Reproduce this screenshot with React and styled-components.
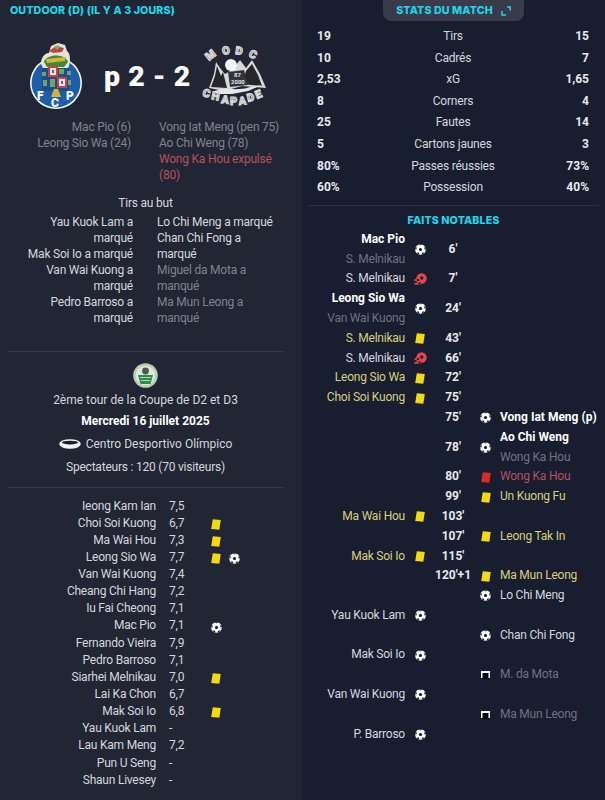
import React from 'react';
import styled, { createGlobalStyle } from 'styled-components';

const GlobalStyle = createGlobalStyle`
  html, body { margin: 0; padding: 0; background: #191d30; }
  body { font-family: Roboto, "Liberation Sans", sans-serif; font-size: 12px; letter-spacing: -0.22px; color: #d5d7de; }
`;

const CYAN = '#1fd6ea';
const YELLOW = '#d8d07e';
const GREY = '#6f7280';
const RED = '#b5525f';

const Page = styled.div`
  display: grid;
  grid-template-columns: 302px 303px;
  width: 605px;
  height: 800px;
  overflow: hidden;
`;

const LeftPanel = styled.section`
  background: #222534;
  padding: 5px 19px 0 8px;
  box-sizing: border-box;
`;

const RightPanel = styled.section`
  background: #191d30;
  display: flex;
  flex-direction: column;
  align-items: stretch;
`;

const Heading = styled.h3`
  margin: 0;
  font-family: Inter, sans-serif;
  font-size: 10.7px;
  font-weight: 800;
  line-height: 12px;
  letter-spacing: 0.1px;
  text-transform: uppercase;
  color: ${CYAN};
  padding-left: ${(p) => p.$indent || 0}px;
  text-align: ${(p) => (p.$center ? 'center' : 'left')};
`;

const MatchRow = styled.div`
  display: grid;
  grid-template-columns: 96px 84px 1fr;
  align-items: center;
  height: 70px;
  margin-top: 24px;
`;

const Crest = styled.div`
  display: flex;
  justify-content: center;
`;

const Score = styled.div`
  font-size: 28.5px;
  font-weight: 900;
  color: #fff;
  text-align: center;
  white-space: nowrap;
  letter-spacing: 0.5px;
`;

const Scorers = styled.div`
  display: grid;
  grid-template-columns: 123px 124px;
  column-gap: 28px;
  margin-top: 8px;
  line-height: 16px;
  color: #80838f;
`;

const Column = styled.div`
  text-align: ${(p) => p.$align || 'left'};
`;

const Line = styled.div`
  color: ${(p) => p.$color || 'inherit'};
`;

const SubTitle = styled.div`
  margin-top: 12px;
  line-height: 16px;
  text-align: center;
  color: #d5d7de;
`;

const Shots = styled.div`
  display: grid;
  grid-template-columns: 125px 120px;
  column-gap: 24px;
  margin-top: 3px;
  line-height: 16px;
`;

const Divider = styled.hr`
  border: 0;
  height: 1px;
  margin: ${(p) => p.$margin};
  background: ${(p) => p.$color || '#363949'};
`;

const Info = styled.div`
  display: flex;
  flex-direction: column;
  align-items: center;
  line-height: 16px;
  color: #d5d7de;
`;

const CupCrest = styled.div`
  height: 24px;
  margin-bottom: 5px;
`;

const Competition = styled.div`
  letter-spacing: 0;
`;

const DateLine = styled.div`
  margin-top: 5px;
  font-weight: 700;
  letter-spacing: 0;
  color: #fff;
`;

const Stadium = styled.div`
  display: flex;
  align-items: center;
  gap: 5px;
  margin-top: 7px;
  letter-spacing: 0;
`;

const Spectators = styled.div`
  margin-top: 7px;
`;

const Ratings = styled.div`
  margin-top: 9.5px;
`;

const RatingRow = styled.div`
  display: grid;
  grid-template-columns: 148px 51px 18px 18px;
  height: 17.15px;
  line-height: 17.15px;
  align-items: center;
`;

const PlayerName = styled.div`
  text-align: right;
  white-space: nowrap;
`;

const Rating = styled.div`
  padding-left: 13px;
`;

const IconCell = styled.div`
  display: flex;
  justify-content: center;
  align-items: center;
`;

const RatingIcon = styled(IconCell)`
  padding-top: 2px;
`;

const Tab = styled.div`
  align-self: center;
  display: flex;
  align-items: center;
  justify-content: center;
  gap: 8px;
  width: 141px;
  height: 21px;
  background: #393b4b;
  border-radius: 0 0 8px 8px;
`;

const Stats = styled.div`
  margin-top: 5px;
  padding: 0 16px 0 15px;
`;

const StatRow = styled.div`
  display: grid;
  grid-template-columns: 60px 1fr 60px;
  height: 21.6px;
  line-height: 21.6px;
`;

const StatValue = styled.div`
  font-weight: 700;
  letter-spacing: 0;
  color: #e8e9ed;
  text-align: ${(p) => p.$align || 'left'};
`;

const StatLabel = styled.div`
  text-align: center;
`;

const Events = styled.div`
  margin-top: 3px;
`;

const EventRow = styled.div`
  display: grid;
  grid-template-columns: 103px 30px 36px 29px 1fr;
  align-items: center;
  line-height: 19.8px;
  min-height: 19.8px;
`;

const EventName = styled.div`
  text-align: ${(p) => p.$align || 'left'};
  white-space: nowrap;
  font-weight: ${(p) => (p.$bold ? 700 : 400)};
  letter-spacing: ${(p) => (p.$bold ? '0' : 'inherit')};
  color: ${(p) => p.$color || '#d5d7de'};
`;

const EventTime = styled.div`
  text-align: center;
  white-space: nowrap;
  font-weight: 700;
  letter-spacing: 0;
  color: #e8e9ed;
`;

const Svg = styled.svg`
  display: block;
  flex: none;
`;

const Ball = ({ color = '#fff', size = 11 }) => (
  <Svg width={size} height={size} viewBox="0 0 12 12">
    <circle cx="6" cy="6" r="5.8" fill={color} />
    <path d="M6 4.2 7.9 5.5 7.1 7.6H4.9L4.1 5.5Z" fill="#20232f" />
    <path d="M4.4 0.2 7.6 0.2 6.8 1.4H5.2ZM0 5 1.2 3 2 4.4 1.2 6.6ZM12 5 10.8 3 10 4.4 10.8 6.6ZM3 11.4 2 9.2 4 9.4 5 11.4ZM9 11.4 10 9.2 8 9.4 7 11.4Z" fill="#20232f" />
  </Svg>
);

const OwnGoal = () => (
  <Svg width={13} height={12} viewBox="0 0 13 12">
    <circle cx="7.5" cy="5.5" r="5.2" fill="#e8474e" />
    <path d="M6.5 3.5 9 3.5 9.5 5.6 8 7 6 6Z" fill="#191d30" />
    <rect x="0.5" y="6" width="6.5" height="5.8" fill="#d8404a" />
    <path d="M0.5 8H2.6V10H0.5ZM3 6H5V8H3ZM4.6 9.4H6.6V11.4H4.6Z" fill="#191d30" />
  </Svg>
);

const Card = ({ color = '#f5d90f' }) => (
  <Svg width={10} height={11} viewBox="0 0 10 11">
    <path d="M1.8 0.3 9.8 1 8.3 10.7 0.2 10Z" fill={color} />
  </Svg>
);

const MissedGoal = () => (
  <Svg width={9} height={8} viewBox="0 0 9 8">
    <rect x="0" y="0" width="9" height="7" fill="#fff" />
    <rect x="1.5" y="2" width="6" height="6" fill="#05060a" />
  </Svg>
);

const ExpandIcon = () => (
  <Svg width={10} height={10} viewBox="0 0 10 10" fill="none" stroke={CYAN} strokeWidth="1.5">
    <path d="M6 1H9.2V4.4" />
    <path d="M1 5V9H5" />
  </Svg>
);

const PortoCrest = () => (
  <Svg width={54} height={68} viewBox="0 0 54 68">
    <circle cx="27" cy="41" r="26" fill="#f4f6fa" />
    <circle cx="27" cy="41" r="24.4" fill="#1b5fa8" />
    <path d="M12 22C12 15 16 11 20 11L22 4 29 1 36 3 38 9C41 11 42 17 40 24L38 28H15Z" fill="#e8e3da" />
    <path d="M15 20C17 12 36 11 39 20L35 25H18Z" fill="#3c8a3e" />
    <path d="M17 17 37 15 36 19 18 21Z" fill="#d9b62f" />
    <path d="M20 9 27 4 35 6 33 10 24 11Z" fill="#c2423f" />
    <path d="M25 5 29 3 31 5 28 8Z" fill="#7fae6c" />
    <rect x="13" y="26" width="27" height="23" fill="#1a4f8f" />
    <rect x="19" y="24" width="10" height="11" fill="#c9403f" />
    <rect x="21" y="26" width="6" height="7" fill="#e9e6e2" />
    <rect x="23" y="28" width="2" height="3" fill="#3b6ea8" />
    <rect x="28" y="35" width="10" height="11" fill="#c9403f" />
    <rect x="30" y="37" width="6" height="7" fill="#e9e6e2" />
    <rect x="32" y="39" width="2" height="3" fill="#3b6ea8" />
    <path d="M13 30H17V34H13ZM38 29H42V33H38ZM14 38H18V44H14ZM21 37H26V45H21ZM30 27H35V32H30ZM39 38H42V43H39Z" fill="#7da05a" />
    <path d="M25 47 29 47 32 55H22Z" fill="#d6b23b" />
    <text x="8" y="58" fontFamily="Roboto" fontSize="12" fontWeight="900" letterSpacing="0" fill="#fff">F</text>
    <text x="22" y="65" fontFamily="Roboto" fontSize="12" fontWeight="900" letterSpacing="0" fill="#fff">C</text>
    <text x="37" y="58" fontFamily="Roboto" fontSize="12" fontWeight="900" letterSpacing="0" fill="#fff">P</text>
  </Svg>
);

const MountainCrest = () => (
  <Svg width={68} height={64} viewBox="0 0 68 64">
    <path d="M7 44 12 30 14 18 18 24 23 30 30 26 38 16 44 24 50 16 58 30 64 44 40 42 22 47Z" fill="#d8d8d8" />
    <path d="M9 43 13 32 15 22 19 32 21 28 25 44Z" fill="#24262c" />
    <path d="M44 27 50 20 56 31 60 42 40 40Z" fill="#24262c" />
    <path d="M26 28 42 26 46 41 28 43Z" fill="#33353c" />
    <path d="M10 48C24 42 34 48 48 43L60 41 46 47 30 50 16 50Z" fill="#e6e6e6" />
    <circle cx="29" cy="21" r="6" fill="#f4f4f4" />
    <text x="32" y="33" fontFamily="Roboto" fontSize="6" fontWeight="700" letterSpacing="0" fill="#e6e6e6">87</text>
    <text x="29" y="40" fontFamily="Roboto" fontSize="6" fontWeight="700" letterSpacing="0" fill="#e6e6e6">2000</text>
    <g fontFamily="Roboto" fontSize="11" fontWeight="900" letterSpacing="0" fill="#8f8f8f" stroke="#d8d8d8" strokeWidth="1.1">
      <text x="7" y="17" transform="rotate(-38 7 17)">M</text>
      <text x="21" y="11" transform="rotate(-12 21 11)">O</text>
      <text x="33" y="10" transform="rotate(8 33 10)">D</text>
      <text x="46" y="12" transform="rotate(28 46 12)">C</text>
      <text x="0" y="52" transform="rotate(15 0 52)">C</text>
      <text x="9" y="55" transform="rotate(12 9 55)">H</text>
      <text x="19" y="59" transform="rotate(6 19 59)">A</text>
      <text x="28" y="61">P</text>
      <text x="37" y="61" transform="rotate(-6 37 61)">A</text>
      <text x="46" y="58" transform="rotate(-14 46 58)">D</text>
      <text x="55" y="55" transform="rotate(-22 55 55)">E</text>
    </g>
  </Svg>
);

const CupBadge = () => (
  <Svg width={25} height={25} viewBox="0 0 25 25">
    <circle cx="12.5" cy="12.5" r="12.3" fill="#b9cdb4" />
    <circle cx="12.5" cy="12.5" r="9.8" fill="#dfe8da" />
    <circle cx="12.5" cy="8" r="3.4" fill="#4e5a52" />
    <path d="M5 12H20L17.5 21H7.5Z" fill="#2f8b4c" />
    <path d="M7 14.5H18M8 17.5H17" stroke="#b7d8b2" strokeWidth="1" />
  </Svg>
);

const StadiumIcon = () => (
  <Svg width={22} height={10} viewBox="0 0 22 10">
    <ellipse cx="11" cy="5" rx="10.8" ry="4.8" fill="#f1f1f3" />
    <ellipse cx="11" cy="3.6" rx="8" ry="1.8" fill="#191b26" />
  </Svg>
);

const icons = {
  goal: <Ball />,
  own: <OwnGoal />,
  yellow: <Card />,
  red: <Card color="#d92a2a" />,
  miss: <MissedGoal />,
};

const stats = [
  ['19', 'Tirs', '15'],
  ['10', 'Cadrés', '7'],
  ['2,53', 'xG', '1,65'],
  ['8', 'Corners', '4'],
  ['25', 'Fautes', '14'],
  ['5', 'Cartons jaunes', '3'],
  ['80%', 'Passes réussies', '73%'],
  ['60%', 'Possession', '40%'],
];

const players = [
  ['Ieong Kam Ian', '7,5'],
  ['Choi Soi Kuong', '6,7', 'yellow'],
  ['Ma Wai Hou', '7,3', 'yellow'],
  ['Leong Sio Wa', '7,7', 'yellow', 'goal'],
  ['Van Wai Kuong', '7,4'],
  ['Cheang Chi Hang', '7,2'],
  ['Iu Fai Cheong', '7,1'],
  ['Mac Pio', '7,1', 'goal'],
  ['Fernando Vieira', '7,9'],
  ['Pedro Barroso', '7,1'],
  ['Siarhei Melnikau', '7,0', 'yellow'],
  ['Lai Ka Chon', '6,7'],
  ['Mak Soi Io', '6,8', 'yellow'],
  ['Yau Kuok Lam', '-'],
  ['Lau Kam Meng', '7,2'],
  ['Pun U Seng', '-'],
  ['Shaun Livesey', '-'],
];

// side h = home (left of the clock), a = away; names: [text, colour, bold]
const events = [
  { side: 'h', icon: 'goal', time: "6'", names: [['Mac Pio', '#fff', true], ['S. Melnikau', GREY]] },
  { side: 'h', icon: 'own', time: "7'", names: [['S. Melnikau']] },
  { side: 'h', icon: 'goal', time: "24'", names: [['Leong Sio Wa', '#fff', true], ['Van Wai Kuong', GREY]] },
  { side: 'h', icon: 'yellow', time: "43'", names: [['S. Melnikau', YELLOW]] },
  { side: 'h', icon: 'own', time: "66'", names: [['S. Melnikau']] },
  { side: 'h', icon: 'yellow', time: "72'", names: [['Leong Sio Wa', YELLOW]] },
  { side: 'h', icon: 'yellow', time: "75'", names: [['Choi Soi Kuong', YELLOW]] },
  { side: 'a', icon: 'goal', time: "75'", names: [['Vong Iat Meng (p)', '#fff', true]] },
  { side: 'a', icon: 'goal', time: "78'", names: [['Ao Chi Weng', '#fff', true], ['Wong Ka Hou', GREY]] },
  { side: 'a', icon: 'red', time: "80'", names: [['Wong Ka Hou', RED]] },
  { side: 'a', icon: 'yellow', time: "99'", names: [['Un Kuong Fu', YELLOW]] },
  { side: 'h', icon: 'yellow', time: "103'", names: [['Ma Wai Hou', YELLOW]] },
  { side: 'a', icon: 'yellow', time: "107'", names: [['Leong Tak In', YELLOW]] },
  { side: 'h', icon: 'yellow', time: "115'", names: [['Mak Soi Io', YELLOW]] },
  { side: 'a', icon: 'yellow', time: "120'+1", names: [['Ma Mun Leong', YELLOW]] },
  { side: 'a', icon: 'goal', names: [['Lo Chi Meng']] },
  { side: 'h', icon: 'goal', names: [['Yau Kuok Lam']] },
  { side: 'a', icon: 'goal', names: [['Chan Chi Fong']] },
  { side: 'h', icon: 'goal', names: [['Mak Soi Io']] },
  { side: 'a', icon: 'miss', names: [['M. da Mota', GREY]] },
  { side: 'h', icon: 'goal', names: [['Van Wai Kuong']] },
  { side: 'a', icon: 'miss', names: [['Ma Mun Leong', GREY]] },
  { side: 'h', icon: 'goal', names: [['P. Barroso']] },
];

const EventNames = ({ names, align }) => (
  <div>
    {names.map(([text, color, bold], i) => (
      <EventName key={i} $align={align} $color={color} $bold={bold}>
        {text}
      </EventName>
    ))}
  </div>
);

export default function App() {
  return (
    <Page>
      <GlobalStyle />
      <LeftPanel>
        <Heading $indent={2}>Outdoor (D) (il y a 3 jours)</Heading>
        <MatchRow>
          <Crest><PortoCrest /></Crest>
          <Score>p 2 - 2</Score>
          <Crest><MountainCrest /></Crest>
        </MatchRow>
        <Scorers>
          <Column $align="right">
            <Line>Mac Pio (6)</Line>
            <Line>Leong Sio Wa (24)</Line>
          </Column>
          <Column>
            <Line>Vong Iat Meng (pen 75)</Line>
            <Line>Ao Chi Weng (78)</Line>
            <Line $color={RED}>Wong Ka Hou expulsé<br />(80)</Line>
          </Column>
        </Scorers>
        <SubTitle>Tirs au but</SubTitle>
        <Shots>
          <Column $align="right">
            <Line>Yau Kuok Lam a<br />marqué</Line>
            <Line>Mak Soi Io a marqué</Line>
            <Line>Van Wai Kuong a<br />marqué</Line>
            <Line>Pedro Barroso a<br />marqué</Line>
          </Column>
          <Column>
            <Line>Lo Chi Meng a marqué</Line>
            <Line>Chan Chi Fong a<br />marqué</Line>
            <Line $color="#80838f">Miguel da Mota a<br />manqué</Line>
            <Line $color="#80838f">Ma Mun Leong a<br />manqué</Line>
          </Column>
        </Shots>
        <Divider $margin="25px 0 11px" />
        <Info>
          <CupCrest><CupBadge /></CupCrest>
          <Competition>2ème tour de la Coupe de D2 et D3</Competition>
          <DateLine>Mercredi 16 juillet 2025</DateLine>
          <Stadium><StadiumIcon />Centro Desportivo Olímpico</Stadium>
          <Spectators>Spectateurs : 120 (70 visiteurs)</Spectators>
        </Info>
        <Divider $margin="12px 0 0" />
        <Ratings>
          {players.map(([name, rating, first, second]) => (
            <RatingRow key={name}>
              <PlayerName>{name}</PlayerName>
              <Rating>{rating}</Rating>
              <RatingIcon>{first && icons[first]}</RatingIcon>
              <RatingIcon>{second && icons[second]}</RatingIcon>
            </RatingRow>
          ))}
        </Ratings>
      </LeftPanel>
      <RightPanel>
        <Tab>
          <Heading>Stats du match</Heading>
          <ExpandIcon />
        </Tab>
        <Stats>
          {stats.map(([home, label, away]) => (
            <StatRow key={label}>
              <StatValue>{home}</StatValue>
              <StatLabel>{label}</StatLabel>
              <StatValue $align="right">{away}</StatValue>
            </StatRow>
          ))}
        </Stats>
        <Divider $margin="6px 6px 9px" $color="#2c2f40" />
        <Heading $center>Faits notables</Heading>
        <Events>
          {events.map((e, i) => (
            <EventRow key={i}>
              {e.side === 'h' ? <EventNames names={e.names} align="right" /> : <span />}
              <IconCell>{e.side === 'h' && icons[e.icon]}</IconCell>
              <EventTime>{e.time}</EventTime>
              <IconCell>{e.side === 'a' && icons[e.icon]}</IconCell>
              {e.side === 'a' ? <EventNames names={e.names} /> : <span />}
            </EventRow>
          ))}
        </Events>
      </RightPanel>
    </Page>
  );
}
